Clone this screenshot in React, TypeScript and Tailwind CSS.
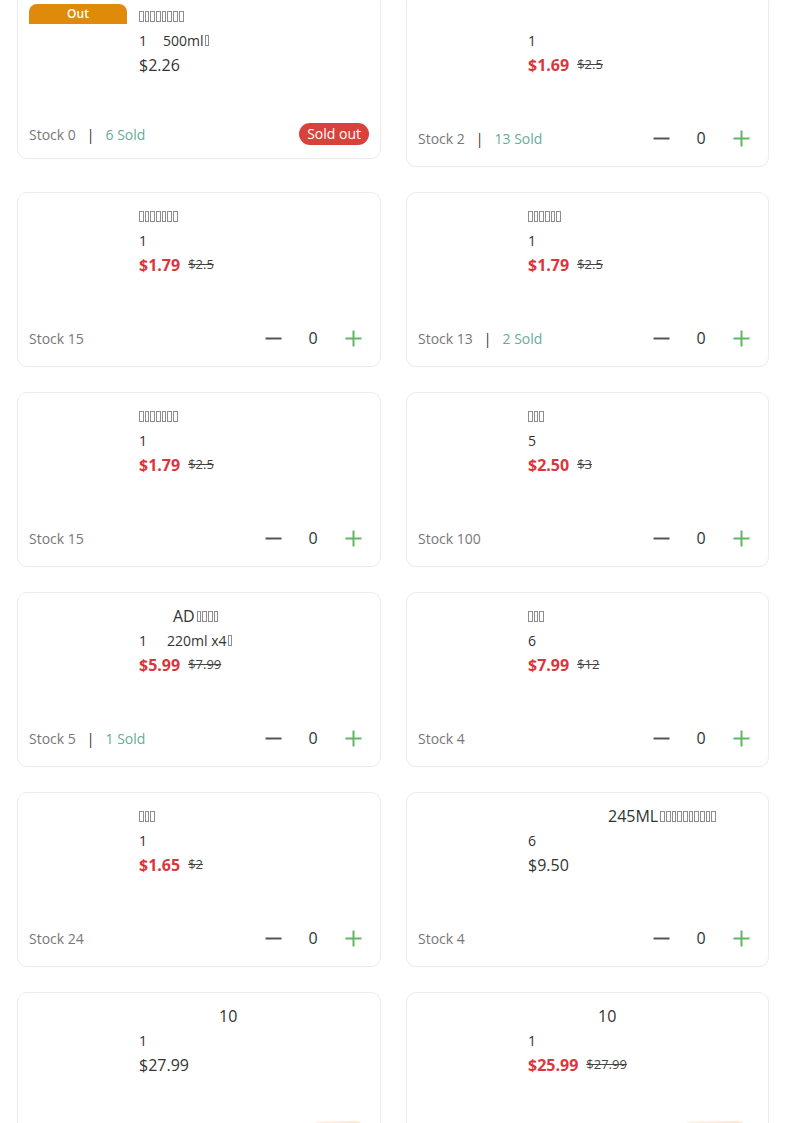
import React from "react";

type Item = {
  tofu?: number;
  titleText?: string;
  titlePad?: number;
  out?: boolean;
  qty: string;
  spec?: string;
  specGap?: "a" | "b";
  price: string;
  orig?: string;
  stock?: number;
  sold?: number;
  soldOut?: boolean;
  peach?: "l" | "r";
};

const items: Item[] = [
  { tofu: 8, out: true, qty: "1", spec: "500ml", specGap: "a", price: "$2.26", stock: 0, sold: 6, soldOut: true },
  { qty: "1", price: "$1.69", orig: "$2.5", stock: 2, sold: 13 },
  { tofu: 7, qty: "1", price: "$1.79", orig: "$2.5", stock: 15 },
  { tofu: 6, qty: "1", price: "$1.79", orig: "$2.5", stock: 13, sold: 2 },
  { tofu: 7, qty: "1", price: "$1.79", orig: "$2.5", stock: 15 },
  { tofu: 3, qty: "5", price: "$2.50", orig: "$3", stock: 100 },
  { titleText: "AD", tofu: 4, titlePad: 34, qty: "1", spec: "220ml x4", specGap: "b", price: "$5.99", orig: "$7.99", stock: 5, sold: 1 },
  { tofu: 3, qty: "6", price: "$7.99", orig: "$12", stock: 4 },
  { tofu: 3, qty: "1", price: "$1.65", orig: "$2", stock: 24 },
  { titleText: "245ML", tofu: 10, titlePad: 80, qty: "6", price: "$9.50", stock: 4 },
  { titleText: "10", titlePad: 80, qty: "1", price: "$27.99", peach: "l" },
  { titleText: "10", titlePad: 70, qty: "1", price: "$25.99", orig: "$27.99", peach: "r" },
];

function Tofu({ n }: { n: number }) {
  return (
    <span className="inline-flex items-end gap-[1px] align-baseline">
      {Array.from({ length: n }).map((_, i) => (
        <span key={i} className="inline-block w-[4.7px] h-[11px] border border-[#8d8d8d]" />
      ))}
    </span>
  );
}

function Minus() {
  return (
    <svg width="17" height="17" viewBox="0 0 17 17">
      <line x1="0.5" y1="8.5" x2="16.5" y2="8.5" stroke="#555" strokeWidth="2" />
    </svg>
  );
}

function Plus() {
  return (
    <svg width="17" height="17" viewBox="0 0 17 17">
      <line x1="0.5" y1="8.5" x2="16.5" y2="8.5" stroke="#5fb761" strokeWidth="2" />
      <line x1="8.5" y1="0.5" x2="8.5" y2="16.5" stroke="#5fb761" strokeWidth="2" />
    </svg>
  );
}

function Card({ it }: { it: Item }) {
  return (
    <div className="border border-[#ececec] rounded-[10px] bg-white p-[11px] shadow-[0_1px_2px_rgba(0,0,0,0.02)]">
      <div className="flex gap-3 h-[105px]">
        <div className="w-[98px] shrink-0 relative">
          {it.out && (
            <div className="h-[20px] w-[98px] rounded-t-[8px] bg-[#e08a0c] text-white text-[12px] font-semibold flex items-center justify-center leading-none">
              Out
            </div>
          )}
        </div>
        <div className="flex flex-col min-w-0">
          <div className="h-[24px] flex items-center whitespace-nowrap" style={{ paddingLeft: it.titlePad ?? 0 }}>
            {it.titleText && <span className="text-[16px] text-[#333] mr-[2px]">{it.titleText}</span>}
            {it.tofu ? <Tofu n={it.tofu} /> : null}
          </div>
          <div className="h-[24px] flex items-center text-[14px] text-[#333] whitespace-nowrap">
            <span>{it.qty}</span>
            {it.spec && (
              <span className={it.specGap === "a" ? "ml-4 flex items-center gap-[1px]" : "ml-5 flex items-center gap-[1px]"}>
                {it.spec}
                <Tofu n={1} />
              </span>
            )}
          </div>
          <div className="h-[26px] flex items-center gap-2 whitespace-nowrap">
            {it.orig ? (
              <>
                <span className="text-[16px] font-bold text-[#d9363e]">{it.price}</span>
                <span className="text-[13px] text-[#444] line-through">{it.orig}</span>
              </>
            ) : (
              <span className="text-[16px] text-[#333]">{it.price}</span>
            )}
          </div>
        </div>
      </div>
      <div className="mt-3 flex items-center justify-between">
        <div className="flex items-center h-[26px] text-[14px] text-[#777] whitespace-nowrap">
          {it.stock !== undefined && <span>Stock {it.stock}</span>}
          {it.sold !== undefined && (
            <>
              <span className="mx-[11px] text-[#333]">|</span>
              <span className="text-[#66ad97]">{it.sold} Sold</span>
            </>
          )}
        </div>
        {it.soldOut ? (
          <div className="h-[22px] px-[8px] rounded-full bg-[#d9423a] text-white text-[14px] flex items-center leading-none">
            Sold out
          </div>
        ) : it.peach ? (
          <div className="h-[34px] flex items-center">
            <div className={it.peach === "l" ? "h-[30px] w-[62px] mt-[-4px] rounded-full bg-gradient-to-r from-[#fff6ee] to-[#ffe4cc]" : "h-[30px] w-[72px] mt-[-4px] mr-[6px] rounded-full bg-gradient-to-r from-[#fff6ee] to-[#ffe4cc]"} />
          </div>
        ) : (
          <div className="flex items-center h-[34px]">
            <button className="w-[32px] h-[34px] flex items-center justify-center">
              <Minus />
            </button>
            <span className="w-[48px] text-center text-[16px] text-[#333]">0</span>
            <button className="w-[32px] h-[34px] flex items-center justify-center">
              <Plus />
            </button>
          </div>
        )}
      </div>
    </div>
  );
}

export default function App() {
  return (
    <div className="bg-white min-h-[1123px] overflow-hidden" style={{ fontFamily: '"Open Sans", "Noto Sans", sans-serif' }}>
      <div className="pl-[17px] -mt-2 grid grid-cols-[364px_363px] gap-x-[25px] gap-y-[25px] items-start">
        {items.map((it, i) => (
          <Card key={i} it={it} />
        ))}
      </div>
    </div>
  );
}
